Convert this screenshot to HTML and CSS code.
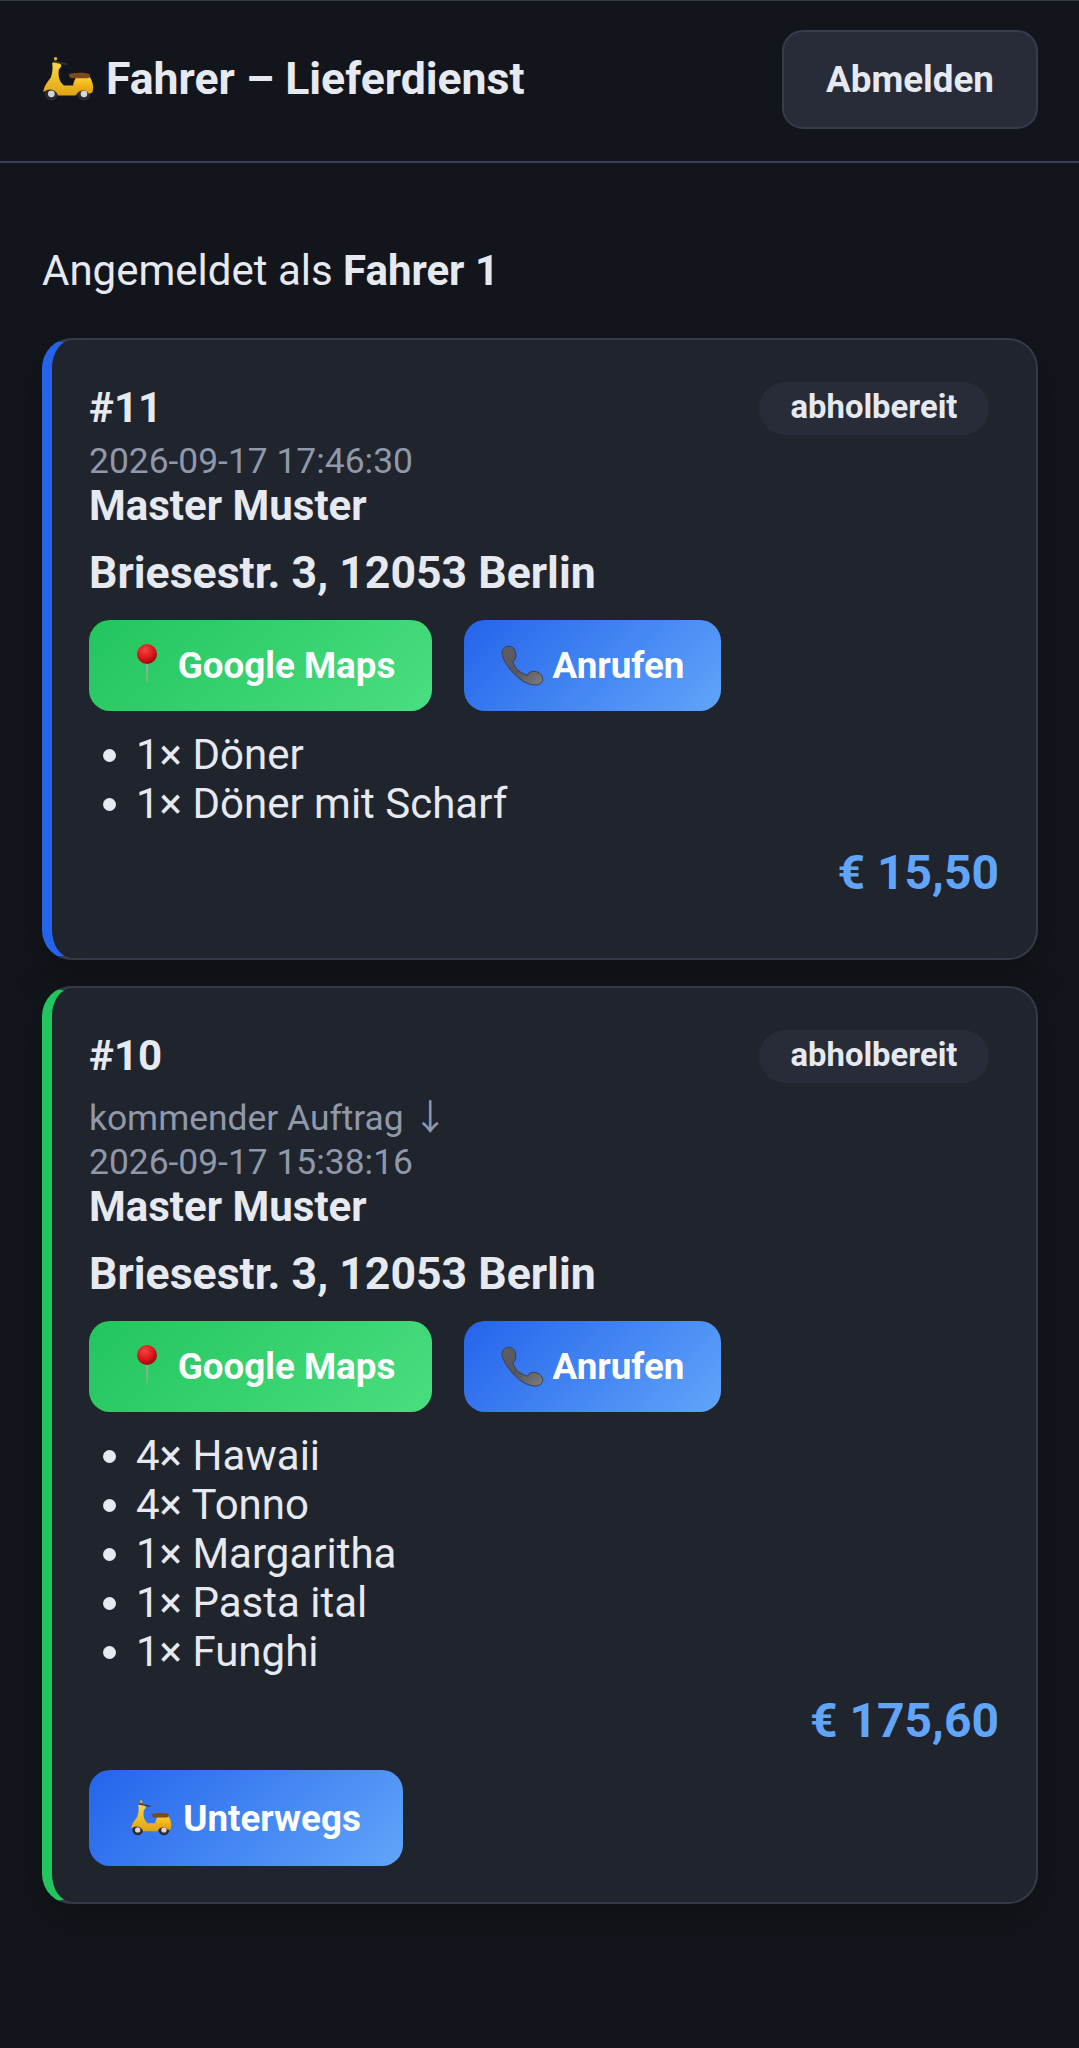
FILE: index.html
```html
<!DOCTYPE html>
<html lang="de">
<head>
<meta charset="utf-8">
<title>Fahrer – Lieferdienst</title>
<link rel="stylesheet" href="styles.css">
</head>
<body>
<svg class="sprites" width="0" height="0" aria-hidden="true">
  <defs>
    <linearGradient id="gy" x1="0" y1="0" x2="0" y2="1"><stop offset="0" stop-color="#f9d94a"/><stop offset="1" stop-color="#e2a312"/></linearGradient>
    <linearGradient id="gy2" x1="0" y1="0" x2="0" y2="1"><stop offset="0" stop-color="#fbce2c"/><stop offset="1" stop-color="#e89c0a"/></linearGradient>
    <radialGradient id="gr" cx="0.4" cy="0.3" r="0.75"><stop offset="0" stop-color="#f2453f"/><stop offset="0.6" stop-color="#d8141a"/><stop offset="1" stop-color="#8f0508"/></radialGradient>
    <linearGradient id="gp" x1="0" y1="0" x2="1" y2="1"><stop offset="0" stop-color="#5f6064"/><stop offset="0.5" stop-color="#55565b"/><stop offset="1" stop-color="#7d7e82"/></linearGradient>
    <symbol id="scooter" viewBox="0 0 122 105">
      <circle cx="20" cy="88" r="16" fill="#2b2b30"/><circle cx="20" cy="88" r="8" fill="#d5d5d5"/>
      <circle cx="98" cy="88" r="16" fill="#2b2b30"/><circle cx="98" cy="88" r="8" fill="#d5d5d5"/>
      <path d="M22 14C32 8 42 12 44 22L38 30C36 45 38 58 50 68L72 68C74 55 80 48 85 48L112 48C120 60 122 75 118 85L110 88C104 78 92 76 84 84L78 92L36 92C32 78 14 72 1 84C1 72 10 60 18 50C22 40 24 30 22 14Z" fill="url(#gy)"/>
      <path d="M78 50L112 50C118 62 120 76 116 84C106 76 92 78 84 84C78 75 74 60 78 50Z" fill="url(#gy2)"/>
      <path d="M62 42C62 37 108 35 112 42C114 48 110 51 104 51L70 51C64 51 62 46 62 42Z" fill="#7b4a1e"/>
      <path d="M26 11L56 17" stroke="#3a3324" stroke-width="4" stroke-linecap="round"/>
      <circle cx="30" cy="4" r="4" fill="#e8b614"/>
    </symbol>
    <symbol id="pin" viewBox="0 0 20 38">
      <path d="M9 18h2.200l-.5 20h-1.200z" fill="#9da69f"/>
      <circle cx="10" cy="10" r="10" fill="url(#gr)"/>
    </symbol>
    <symbol id="phone" viewBox="0 0 44 42">
      <path d="M5 2C9 0 14 2 15 8C16 13 14 16 12 17C14 24 20 29 27 31C29 27 33 26 38 28C43 31 44 36 41 39C37 43 26 41 17 33C8 25 1 14 1 8C1 5 3 3 5 2Z" fill="url(#gp)" stroke="#3c3e46" stroke-width="1"/>
    </symbol>
  </defs>
</svg>

<header class="topbar">
  <h1 class="brand"><svg class="emoji emoji-brand"><use href="#scooter"/></svg><span>Fahrer – Lieferdienst</span></h1>
  <button class="logout">Abmelden</button>
</header>

<main class="content">
  <p class="who">Angemeldet als <strong>Fahrer 1</strong></p>

  <article class="card card-blue">
    <div class="card-head">
      <div class="order-no">#11</div>
      <span class="badge">abholbereit</span>
    </div>
    <div class="meta">2026-09-17 17:46:30</div>
    <div class="name">Master Muster</div>
    <div class="address">Briesestr. 3, 12053 Berlin</div>
    <div class="actions">
      <a class="btn btn-green"><svg class="emoji emoji-pin"><use href="#pin"/></svg><span>Google Maps</span></a>
      <a class="btn btn-blue"><svg class="emoji emoji-phone"><use href="#phone"/></svg><span>Anrufen</span></a>
    </div>
    <ul class="items">
      <li>1× Döner</li>
      <li>1× Döner mit Scharf</li>
    </ul>
    <div class="price">€ 15,50</div>
  </article>

  <article class="card card-green">
    <div class="card-head">
      <div class="order-no">#10</div>
      <span class="badge">abholbereit</span>
    </div>
    <div class="meta meta-next">kommender Auftrag <span class="arrow">↓</span></div>
    <div class="meta">2026-09-17 15:38:16</div>
    <div class="name">Master Muster</div>
    <div class="address">Briesestr. 3, 12053 Berlin</div>
    <div class="actions">
      <a class="btn btn-green"><svg class="emoji emoji-pin"><use href="#pin"/></svg><span>Google Maps</span></a>
      <a class="btn btn-blue"><svg class="emoji emoji-phone"><use href="#phone"/></svg><span>Anrufen</span></a>
    </div>
    <ul class="items">
      <li>4× Hawaii</li>
      <li>4× Tonno</li>
      <li>1× Margaritha</li>
      <li>1× Pasta ital</li>
      <li>1× Funghi</li>
    </ul>
    <div class="price">€ 175,60</div>
    <button class="btn btn-blue btn-go"><svg class="emoji emoji-go"><use href="#scooter"/></svg><span>Unterwegs</span></button>
  </article>
</main>
</body>
</html>
```
FILE: styles.css
```css
* { box-sizing: border-box; }
html, body { margin: 0; padding: 0; }
body {
  min-height: 2048px;
  background: #12151b;
  color: #e6e9f0;
  font-family: Roboto, "Noto Sans", sans-serif;
  font-size: 42px;
}
.sprites { position: absolute; }
.topbar {
  height: 163px;
  padding: 30px 41px 0 43px;
  display: flex;
  justify-content: space-between;
  align-items: flex-start;
  border-top: 1px solid #343a44;
  border-bottom: 2px solid #3a4150;
}
.brand {
  margin: 0;
  height: 96px;
  display: flex;
  align-items: center;
  font-size: 44.6px;
  font-weight: 700;
}
.emoji { display: block; flex: none; }
.emoji-brand { width: 51px; height: 44px; margin-right: 12px; }
.logout {
  width: 256px;
  height: 99px;
  margin-top: -1px;
  border: 2px solid #353c4a;
  border-radius: 21px;
  background: #272c38;
  color: #e6e9f0;
  font: 700 36.75px Roboto, sans-serif;
}
.content { padding: 0 41px 0 42px; }
.who { margin: 0; padding-top: 81px; height: 175px; font-size: 42px; line-height: 54px; }
.who strong { font-weight: 700; }
.card {
  background: #20242d;
  border: 2px solid #343a47;
  border-left: 10px solid;
  border-radius: 30px;
  padding: 42px 37px 36px 37px;
  box-shadow: 0 14px 40px rgba(0, 0, 0, .22);
}
.card-blue { border-left-color: #2563eb; margin-bottom: 26px; }
.card-green { border-left-color: #22c55e; }
.card-head { display: flex; justify-content: space-between; align-items: flex-start; }
.order-no { font-size: 42px; font-weight: 700; line-height: 51px; }
.badge {
  height: 53px;
  width: 230px;
  margin-right: 10px;
  border-radius: 27px;
  background: #272c38;
  font-size: 32.8px;
  font-weight: 700;
  line-height: 51px;
  text-align: center;
}
.meta { color: #8f99aa; font-size: 35.4px; line-height: 44px; margin-top: 4px; }
.meta + .meta { margin-top: 0; }
.meta-next { margin-top: 13px; }
.arrow { font-family: "Noto Sans CJK SC", sans-serif; line-height: 0; }
.name { font-size: 42px; font-weight: 700; line-height: 46px; }
.address { margin-top: 18px; font-size: 44.6px; font-weight: 700; line-height: 52px; }
.actions { display: flex; gap: 32px; margin-top: 21px; }
.btn {
  display: inline-flex;
  align-items: center;
  justify-content: center;
  height: 91px;
  border: 0;
  border-radius: 21px;
  color: #fff;
  font: 700 36.75px Roboto, sans-serif;
}
.btn-green { width: 343px; background: linear-gradient(135deg, #22c55e, #4ade80); }
.btn-blue { width: 257px; background: linear-gradient(135deg, #2563eb, #60a5fa); }
.btn-go { display: flex; width: 314px; height: 96px; }
.emoji-pin { width: 20px; height: 38px; margin: -5px 21px 0 11px; }
.emoji-phone { width: 43px; height: 41px; margin: -1px 9px 0 0; }
.emoji-go { width: 41px; height: 36px; margin-right: 11px; }
.items { margin: 19px 0 0; padding: 0 0 0 47px; font-size: 42px; line-height: 49px; }
.price {
  margin-top: 18px;
  margin-bottom: 23px;
  color: #60a5fa;
  font-size: 48px;
  font-weight: 700;
  line-height: 53px;
  text-align: right;
}
```
